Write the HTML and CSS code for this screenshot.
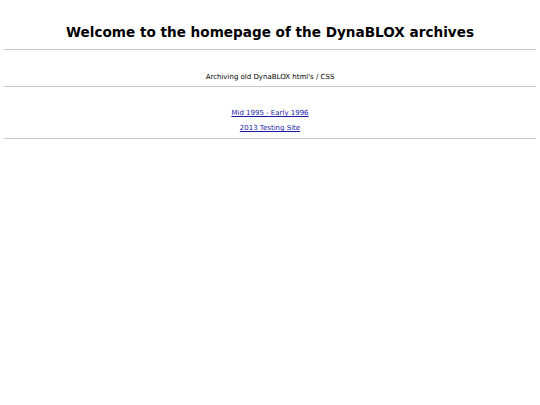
FILE: index.html
```html
<!DOCTYPE html>
<html>
<head>
<meta charset="utf-8">
<link rel="stylesheet" href="styles.css">
</head>
<body class="page">
<h1 class="title">Welcome to the homepage of the DynaBLOX archives</h1>
<hr class="rule">
<p class="intro">Archiving old DynaBLOX html's / CSS</p>
<hr class="rule">
<div class="links">
<a class="link" href="#">Mid 1995 - Early 1996</a>
<a class="link" href="#">2013 Testing Site</a>
</div>
<hr class="rule">
</body>
</html>
```
FILE: styles.css
```css
.page {
  margin: 0;
  padding: 0 4px;
  background: #fff;
  font-family: "DejaVu Sans", Verdana, sans-serif;
  color: #000;
}
.title {
  margin: 0;
  padding-top: 22px;
  height: 27px;
  font-size: 13.6px;
  line-height: 20px;
  text-align: center;
  font-weight: bold;
}
.rule {
  margin: 0;
  border: 0;
  border-top: 1px solid #c8c8c8;
  height: 0;
}
.intro {
  margin: 0;
  padding-top: 22px;
  height: 14px;
  font-size: 7px;
  line-height: 10px;
  text-align: center;
}
.links {
  display: flex;
  flex-direction: column;
  align-items: center;
  gap: 5px;
  padding: 21px 0 5px;
  font-size: 7px;
  line-height: 10px;
}
.link {
  color: #1a1aa6;
}
```
